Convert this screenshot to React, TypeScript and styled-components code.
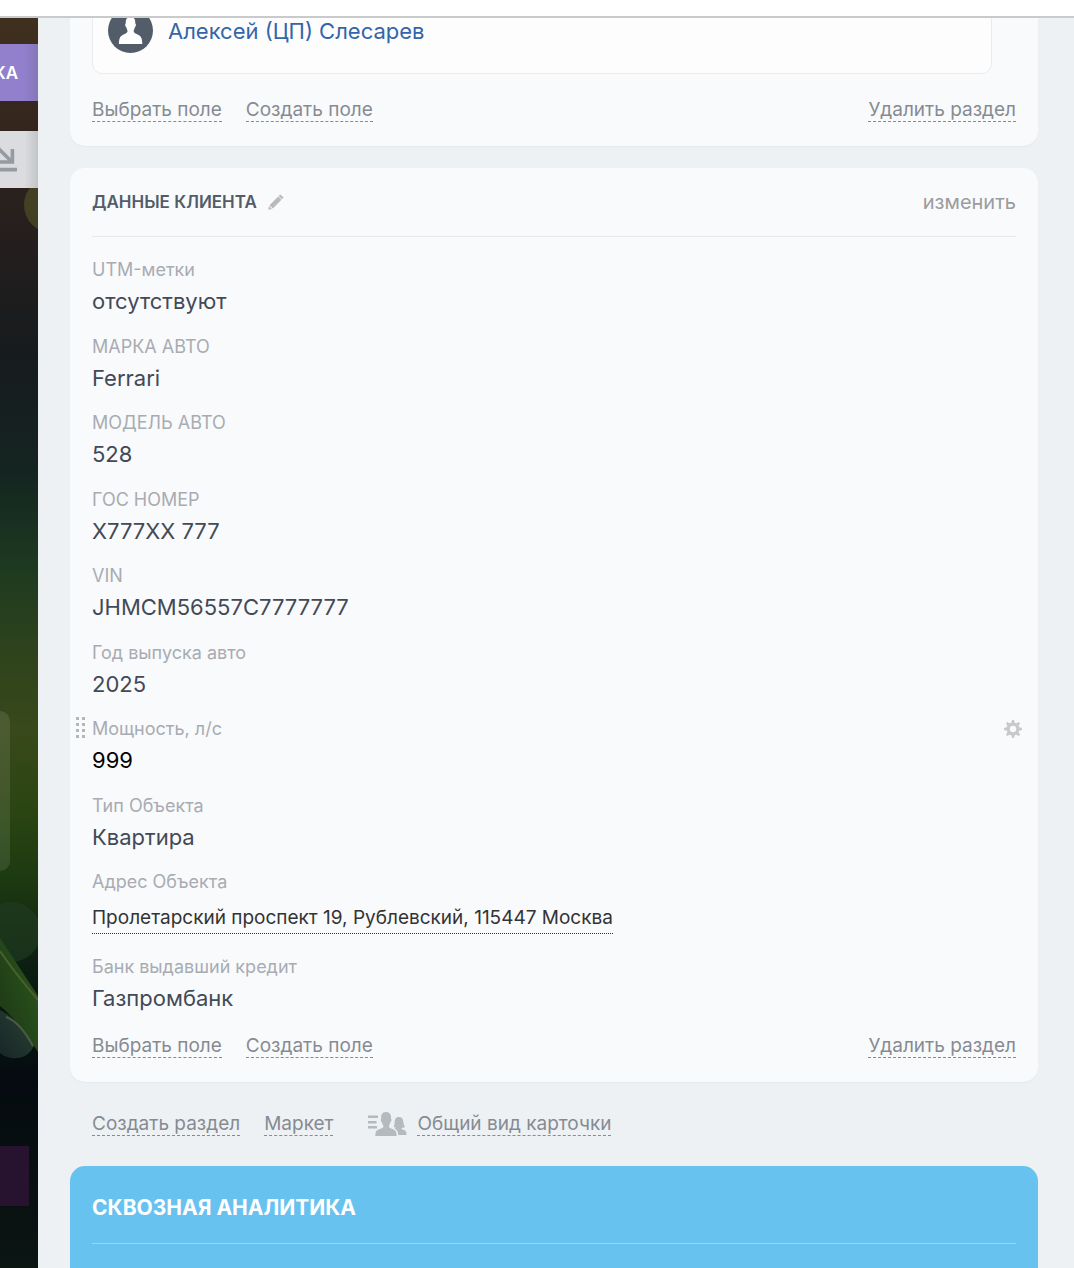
import React from "react";
import styled, { createGlobalStyle } from "styled-components";

const GlobalStyle = createGlobalStyle`
  * { box-sizing: border-box; }
  body {
    margin: 0;
    background: #edf1f4;
    font-family: Inter, "Noto Sans", "Liberation Sans", sans-serif;
    color: #434956;
  }
  button {
    font-family: inherit;
    margin: 0;
    padding: 0;
    border: 0;
    background: none;
    cursor: pointer;
  }
`;

const Page = styled.div`
  min-height: 100vh;
  display: flex;
  flex-direction: column;
`;

const TopBar = styled.header`
  height: 18px;
  background: #fff;
  border-bottom: 2px solid #c8cacb;
`;

const Workspace = styled.div`
  flex: 1;
  display: grid;
  grid-template-columns: 38px minmax(0, 1fr);
  overflow: hidden;
`;

const Desktop = styled.aside`
  position: relative;
  overflow: hidden;
  display: flex;
  flex-direction: column;
  gap: 30px;
  padding-top: 26px;
  background: #0c1410;
`;

const Wallpaper = styled.svg`
  position: absolute;
  top: 0;
  left: 0;
`;

const SideButton = styled.button<{ $tone: "accent" | "plain" }>`
  position: relative;
  display: flex;
  align-items: center;
  justify-content: flex-end;
  height: 57px;
  && { padding-right: 20px; }
  overflow: hidden;
  color: ${(p) => (p.$tone === "accent" ? "#fff" : "#969ba1")};
  background: ${(p) =>
    p.$tone === "accent"
      ? "linear-gradient(90deg, #9280cd 60%, #8577ba)"
      : "linear-gradient(90deg, #dbdce0 65%, #c3c4c8)"};
  font-size: 17px;
  font-weight: 600;
  svg { flex: none; }
`;

const Panel = styled.main`
  display: flex;
  flex-direction: column;
  padding: 0 36px 0 32px;
`;

const Card = styled.section<{ $scrolled?: boolean }>`
  margin-top: ${(p) => (p.$scrolled ? "-60px" : "22px")};
  padding: 0 22px 24px;
  border-radius: 15px;
  background: #f9fafc;
  box-shadow: 0 1px 1px #e4e8eb;
`;

const Contact = styled.div`
  display: flex;
  align-items: center;
  gap: 14px;
  margin-right: 24px;
  margin-bottom: 25px;
  padding: 49px 15px 19px;
  border: 1px solid #e9ebec;
  border-radius: 10px;
  background: #fdfdfd;
`;

const ContactLink = styled.a`
  color: #3465a8;
  font-size: 22px;
  line-height: 30px;
  text-decoration: none;
`;

const Actions = styled.div`
  display: flex;
  gap: 24px;
`;

const ActionButton = styled.button<{ $end?: boolean }>`
  && {
    margin-left: ${(p) => (p.$end ? "auto" : "0")};
    border-bottom: 1px dashed #868b92;
  }
  color: #868b92;
  font-size: 19px;
  line-height: 22px;
`;

const CardHeader = styled.div`
  display: flex;
  align-items: center;
  gap: 11px;
  height: 69px;
  border-bottom: 1px solid #e5e8ea;
`;

const CardTitle = styled.h2`
  margin: 0;
  color: #535c69;
  font-size: 17px;
  line-height: 22px;
  font-weight: 600;
`;

const IconButton = styled.button`
  display: flex;
`;

const EditButton = styled.button`
  && { margin-left: auto; }
  color: #9b9c9e;
  font-size: 20px;
  line-height: 24px;
`;

const Fields = styled.dl`
  margin: 21px 0 22px;
`;

const Field = styled.div`
  position: relative;
  padding-bottom: 18px;
  &:nth-child(odd) { padding-bottom: 19px; }
  &:last-child { padding-bottom: 0; }
`;

const Label = styled.dt`
  color: #a8acb2;
  font-size: 18px;
  line-height: 24px;
`;

const Value = styled.dd<{ $strong?: boolean }>`
  margin: 4px 0 0;
  color: ${(p) => (p.$strong ? "#000" : "#434956")};
  font-size: 22px;
  line-height: 30px;
`;

const Address = styled.dd`
  display: flex;
  margin: 8px 0 2px;
`;

const AddressLink = styled.a`
  border-bottom: 1px dotted #333;
  color: #333;
  font-size: 19px;
  line-height: 31px;
  text-decoration: none;
`;

const DragHandle = styled.button`
  position: absolute;
  top: 0;
  left: -16px;
  display: flex;
`;

const Settings = styled.button`
  position: absolute;
  top: 3px;
  right: -6px;
  display: flex;
`;

const Footer = styled.div`
  display: flex;
  gap: 24px;
  padding: 30px 22px;
`;

const CommonView = styled.div`
  display: flex;
  gap: 10px;
  margin-left: 10px;
`;

const Analytics = styled.section`
  flex: 1;
  padding: 0 22px 24px;
  border-radius: 15px 15px 0 0;
  background: #68c2f0;
`;

const AnalyticsTitle = styled.h2`
  margin: 0;
  padding: 29px 0 22px;
  border-bottom: 1px solid #98d6f5;
  color: #fff;
  font-size: 21px;
  line-height: 26px;
  font-weight: 700;
`;

const DesktopArt = () => (
  <Wallpaper width="38" height="1250" viewBox="0 18 38 1250" aria-hidden="true">
    <defs>
      <linearGradient id="sky" gradientUnits="userSpaceOnUse" x1="0" y1="18" x2="0" y2="1268">
        <stop offset="0" stopColor="#40301f" />
        <stop offset="0.08" stopColor="#35261e" />
        <stop offset="0.17" stopColor="#251f1d" />
        <stop offset="0.27" stopColor="#171b1e" />
        <stop offset="0.36" stopColor="#142421" />
        <stop offset="0.44" stopColor="#1d3a20" />
        <stop offset="0.5" stopColor="#2d421d" />
        <stop offset="0.57" stopColor="#38491a" />
        <stop offset="0.64" stopColor="#294411" />
        <stop offset="0.69" stopColor="#1c3a11" />
        <stop offset="0.75" stopColor="#0d2011" />
        <stop offset="0.85" stopColor="#050b10" />
        <stop offset="1" stopColor="#0b1512" />
      </linearGradient>
      <linearGradient id="leaf" x1="0" y1="1" x2="1" y2="0">
        <stop offset="0" stopColor="#1b3517" />
        <stop offset="0.6" stopColor="#264a19" />
        <stop offset="1" stopColor="#3b5426" />
      </linearGradient>
      <linearGradient id="drop" x1="0" y1="1" x2="1" y2="0">
        <stop offset="0" stopColor="#172629" />
        <stop offset="1" stopColor="#2b4131" />
      </linearGradient>
    </defs>
    <rect y="18" width="38" height="1250" fill="url(#sky)" />
    <circle cx="52" cy="205" r="28" fill="#4a4826" opacity="0.8" />
    <rect x="-20" y="711" width="30" height="160" rx="10" fill="#fff" opacity="0.1" />
    <circle cx="11" cy="932" r="30" fill="#203a1f" opacity="0.7" />
    <path d="M0 938L38 996V1052Q16 1018 0 1006Z" fill="url(#leaf)" />
    <path d="M0 951Q14 972 38 1000" fill="none" stroke="#49602f" strokeWidth="2" />
    <path d="M0 1010Q20 1020 34 1046Q27 1060 12 1058Q4 1057 0 1053Z" fill="url(#drop)" />
    <path d="M6 1017Q20 1022 33 1046" fill="none" stroke="#5b6b4d" strokeWidth="2" opacity="0.7" />
    <rect y="1146" width="29" height="60" fill="#27122f" />
  </Wallpaper>
);

const DownloadIcon = () => (
  <svg width="28" height="28" viewBox="0 0 28 28" fill="none" stroke="currentColor" strokeWidth="3.6" aria-hidden="true">
    <path d="M8 2L22 16M10 16H22.400V3M4 23.600H27" />
  </svg>
);

const Avatar = () => (
  <svg width="46" height="46" viewBox="0 0 46 46" aria-hidden="true">
    <circle cx="22.500" cy="22.500" r="22.500" fill="#535c69" />
    <path
      fill="#fff"
      d="M22.500 9C26.500 9 27.600 12 27.200 15.500C28.300 15.500 28 18.600 27 19C26.500 21 25.800 22 25.600 23C25.800 25.200 27.600 25.400 30.600 27C33.800 28.600 34.200 32 34.300 36H10.900C11 32 11.400 28.600 14.600 27C17.600 25.400 19.400 25.200 19.600 23C19.400 22 18.700 21 18.200 19C17.200 18.600 16.800 15.500 17.800 15.500C17.400 12 18.500 9 22.500 9Z"
    />
  </svg>
);

const PencilIcon = () => (
  <svg width="16" height="16" viewBox="0 0 16 16" fill="#b8bbbe" aria-hidden="true">
    <path d="M12.300 .4L15.600 3.600L14 5.300L10.700 2ZM10.200 2.500L13.500 5.800L4.800 14.400L1.500 11.200ZM1 12L4 15L.3 15.800Z" />
  </svg>
);

const GripIcon = () => (
  <svg width="9" height="22" viewBox="0 0 9 22" fill="#b4b7ba" aria-hidden="true">
    {[0, 6, 12, 18].map((y) => (
      <React.Fragment key={y}>
        <rect y={y} width="3" height="3" />
        <rect x="6" y={y} width="3" height="3" />
      </React.Fragment>
    ))}
  </svg>
);

const GearIcon = () => (
  <svg width="18" height="18" viewBox="0 0 18 18" aria-hidden="true">
    <g fill="#c7c9cb">
      {[0, 45, 90, 135].map((a) => (
        <path key={a} transform={`rotate(${a} 9 9)`} d="M8 0H10L11 4V14L10 18H8L7 14V4Z" />
      ))}
      <circle cx="9" cy="9" r="6.500" />
    </g>
    <circle cx="9" cy="9" r="3.200" fill="#f9fafc" />
  </svg>
);

const PeopleIcon = () => (
  <svg width="40" height="24" viewBox="0 0 40 24" fill="#b5babe" aria-hidden="true">
    <path d="M1 3.500H11V6H1ZM1 9H9.500V11.500H1ZM1 14H10V16.500H1Z" />
    <path d="M19 0C23 0 24.500 3 24 6.500C25 7 24.500 9.500 23.500 10C23 12 22 13 22 14.500C22.200 16 24 16.400 26.500 17.500C29 18.600 29.500 20 29.700 24H8.300C8.500 20 9 18.600 11.500 17.500C14 16.400 16.300 16 16.500 14.500C16.300 13 15.300 12 14.700 10C13.700 9.500 13.400 7 14.300 6.500C13.800 3 15 0 19 0Z" />
    <path d="M32 5C35.800 5 36.200 8.500 36.500 11C36.700 13 37.500 14 38 15C36.500 15.800 35.500 15.800 34.500 16C34.700 17.500 36 17.600 37.500 18.300C39 19 39.400 20 39.500 23H31.200C31.100 19.500 30 17.800 27.200 16.600L29.500 16C28.400 15.800 27.500 15.500 26.700 15C27.600 13.500 27.400 12 27.600 10C28 7 28.800 5 32 5Z" />
  </svg>
);

const SectionActions = () => (
  <Actions>
    <ActionButton type="button">Выбрать поле</ActionButton>
    <ActionButton type="button">Создать поле</ActionButton>
    <ActionButton type="button" $end>Удалить раздел</ActionButton>
  </Actions>
);

type FieldData = { label: string; value: string; kind?: "active" | "address" };

const fields: FieldData[] = [
  { label: "UTM-метки", value: "отсутствуют" },
  { label: "МАРКА АВТО", value: "Ferrari" },
  { label: "МОДЕЛЬ АВТО", value: "528" },
  { label: "ГОС НОМЕР", value: "Х777ХХ 777" },
  { label: "VIN", value: "JHMCM56557C7777777" },
  { label: "Год выпуска авто", value: "2025" },
  { label: "Мощность, л/с", value: "999", kind: "active" },
  { label: "Тип Объекта", value: "Квартира" },
  { label: "Адрес Объекта", value: "Пролетарский проспект 19, Рублевский, 115447 Москва", kind: "address" },
  { label: "Банк выдавший кредит", value: "Газпромбанк" },
];

const FieldRow = ({ label, value, kind }: FieldData) => (
  <Field>
    <Label>
      {kind === "active" && (
        <DragHandle type="button" aria-label="Переместить"><GripIcon /></DragHandle>
      )}
      {label}
    </Label>
    {kind === "address" ? (
      <Address><AddressLink href="#address">{value}</AddressLink></Address>
    ) : (
      <Value $strong={kind === "active"}>
        {value}
        {kind === "active" && (
          <Settings type="button" aria-label="Настройки"><GearIcon /></Settings>
        )}
      </Value>
    )}
  </Field>
);

export default function App() {
  return (
    <Page>
      <GlobalStyle />
      <TopBar />
      <Workspace>
        <Desktop>
          <DesktopArt />
          <SideButton type="button" $tone="accent">КА</SideButton>
          <SideButton type="button" $tone="plain" aria-label="Скачать"><DownloadIcon /></SideButton>
        </Desktop>
        <Panel>
          <Card $scrolled>
            <Contact>
              <Avatar />
              <ContactLink href="#contact">Алексей (ЦП) Слесарев</ContactLink>
            </Contact>
            <SectionActions />
          </Card>
          <Card>
            <CardHeader>
              <CardTitle>ДАННЫЕ КЛИЕНТА</CardTitle>
              <IconButton type="button" aria-label="Переименовать"><PencilIcon /></IconButton>
              <EditButton type="button">изменить</EditButton>
            </CardHeader>
            <Fields>
              {fields.map((f) => <FieldRow key={f.label} {...f} />)}
            </Fields>
            <SectionActions />
          </Card>
          <Footer>
            <ActionButton type="button">Создать раздел</ActionButton>
            <ActionButton type="button">Маркет</ActionButton>
            <CommonView>
              <PeopleIcon />
              <ActionButton type="button">Общий вид карточки</ActionButton>
            </CommonView>
          </Footer>
          <Analytics>
            <AnalyticsTitle>СКВОЗНАЯ АНАЛИТИКА</AnalyticsTitle>
          </Analytics>
        </Panel>
      </Workspace>
    </Page>
  );
}
